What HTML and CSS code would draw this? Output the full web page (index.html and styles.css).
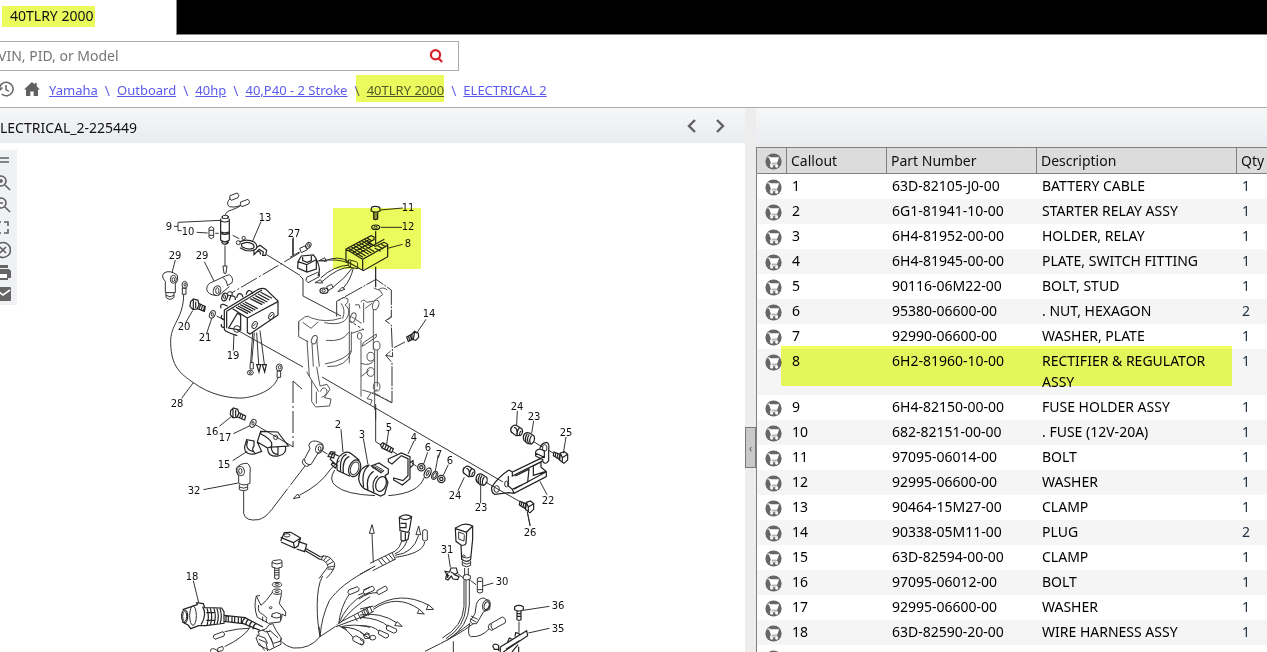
FILE: index.html
```html
<!DOCTYPE html>
<html lang="en">
<head>
<meta charset="utf-8">
<title>40TLRY 2000 - ELECTRICAL 2</title>
<link rel="stylesheet" href="styles.css">
</head>
<body>
<svg class="defs" aria-hidden="true">
  <symbol id="cart" viewBox="0 0 18 18">
    <circle cx="9" cy="9" r="8.600" fill="#666"/>
    <path d="M2.500 4.200h2.200l2.200 6.300h6" fill="none" stroke="#fff" stroke-width="1.200"/>
    <path d="M4.800 4.600h10.200l-1.900 5.200H6.700z" fill="#fff"/>
    <path d="M6.800 10.500l-1 1.900h7.700" fill="none" stroke="#fff" stroke-width="1.100"/>
    <circle cx="7" cy="14" r="1.500" fill="#fff"/><circle cx="12.300" cy="14" r="1.500" fill="#fff"/>
  </symbol>
</svg>
<div class="app">
  <header class="tabs"><button class="tab" type="button"><span class="mark tab-mark">40TLRY 2000</span></button></header>

  <form class="search">
    <input type="text" placeholder="VIN, PID, or Model" aria-label="VIN, PID, or Model">
    <button type="button" aria-label="Search"><svg width="14" height="14" viewBox="0 0 14 14" fill="none" stroke="#d8232a" stroke-width="2.200"><circle cx="6.500" cy="5.800" r="4.600"/><path d="M9.300 9l3.800 4"/></svg></button>
  </form>

  <nav class="crumbs" aria-label="Breadcrumb">
    <button type="button" aria-label="History"><svg width="20" height="16" viewBox="0 0 20 16" fill="none" stroke="#666" stroke-width="1.500"><path d="M5.500 8a6.800 6.800 0 1 1 2.200 5M2.500 6.500l3 3 3-3M12 4v4.500l3 2"/></svg></button>
    <a class="home" href="#" aria-label="Home"><svg width="16" height="16" viewBox="0 0 16 16" fill="#606060"><path d="M8 1l2.700 2.500V2h2v3.300L16 8.500h-2V15h-4.300v-4.500H6.300V15H2V8.500H0z"/></svg></a>
    <ol>
      <li><a href="#">Yamaha</a></li>
      <li><a href="#">Outboard</a></li>
      <li><a href="#">40hp</a></li>
      <li><a href="#">40,P40 - 2 Stroke</a></li>
      <li class="current"><a href="#">40TLRY 2000</a></li>
      <li><a href="#">ELECTRICAL 2</a></li>
    </ol>
  </nav>

  <main class="split">
    <section class="drawing">
      <div class="bar">
        <h1>LECTRICAL_2-225449</h1>
        <button type="button" aria-label="Previous"><svg width="12" height="14" viewBox="0 0 12 14"><path d="M9 1L3 7l6 6"/></svg></button>
        <button type="button" aria-label="Next"><svg width="12" height="14" viewBox="0 0 12 14"><path d="M3 1l6 6-6 6"/></svg></button>
      </div>
      <div class="stage">
        <svg class="diagram" viewBox="0 143 745 509" role="img" aria-label="Electrical parts diagram">
          <g class="ink">
            <g transform="translate(150 180) scale(.3333)">
              <path d="M72 139H84M212 121L84 127V152H95M140 157L173 159M196 160H206M177 144q7-8 14 0v28q-7 8-14 0zM177 151h14M177 166h14"/>
              <path class="bold" d="M212 116v64q13 12 26 0v-64M212 155q13 7 26 0M212 160q13 7 26 0M214 186q10 14 22 0M217 108v8M234 108v8M212 122q13 8 26 0"/><ellipse cx="226" cy="111" rx="10" ry="5"/>
              <path d="M226 106Q228 94 245 90Q262 84 273 76M241 55Q226 70 238 80Q250 84 272 77M272 66l22-8q8 6 2 14l-20 8q-8-6-4-14M240 47l22-8q8 6 2 14l-20 8q-8-6-4-14M225 197V258M219 258H231L228 280H222Z"/>
              <path d="M248 166L268 176M350 224L450 286M333 125L308 183M430 172V229"/>
              <path class="bold" d="M268 186Q290 174 314 187Q326 198 317 208Q296 220 270 203M274 192Q292 182 308 192Q316 199 309 205Q294 211 276 200ZM318 204L330 196L350 211L347 226L338 226L340 216L328 208L320 216L312 224V208M322 212l8 4 2 8"/><circle cx="265" cy="188" r="6"/><circle cx="281" cy="174" r="5"/>
              <path stroke-dasharray="55 7 6 7" d="M450 218L243 340"/>
              <path d="M76 240L66 278M42 279Q60 268 82 286Q87 302 76 312V338H46V304Q32 290 42 279M48 338v14q12 12 24 0v-14M48 346q12 9 24 0"/><ellipse cx="70" cy="298" rx="9" ry="12"/><ellipse cx="70" cy="299" rx="4" ry="6"/>
              <path d="M163 245L192 303M200 346Q174 346 170 328Q171 309 190 305L226 288M205 347L238 320M226 288l12-4q14 10 8 24l-12 8M219 292q12 9 14 26"/><ellipse cx="201" cy="332" rx="11" ry="15" transform="rotate(20 201 332)"/><ellipse cx="202" cy="332" rx="5" ry="9"/>
              <ellipse cx="104" cy="315" rx="8" ry="11"/><ellipse cx="105" cy="314" rx="3" ry="5"/><path d="M97 324h11v19H97zM101 343C100 420 60 430 62 490C64 560 90 580 130 608C180 645 240 656 280 654C330 648 375 625 384 592M382 572h10v20h-11z"/><ellipse cx="388" cy="563" rx="9" ry="11"/><ellipse cx="389" cy="562" rx="4" ry="5"/><path d="M130 608L95 655"/>
              <path class="bold" d="M122 365l8-8 14 4 3 14-6 12-12 2-9-10zM130 360v28M137 365v20M144 369l22 11-3 14-22-9M152 373l-4 12M158 376l-4 12M164 380l-4 12"/><path d="M128 392L107 428M185 416L170 460M200 408L222 420"/><ellipse cx="187" cy="403" rx="8" ry="12" transform="rotate(25 187 403)"/><ellipse cx="187" cy="403" rx="3" ry="6"/>
              <path class="bold" d="M223 390V448Q224 455 262 467M223 390L325 328Q343 321 352 332L384 363V405L300 462L292 457V414L384 365M292 414L248 386M230 394V445M230 394L336 330M236 444L262 400L272 406V450Z"/>
              <path class="bold" d="M258 382l36 19M264 378l38 20M271 374l38 20M278 370l38 20M285 366l38 20M301 356l36 18M308 352l36 18M316 347l36 19M324 342l34 18M332 337l34 18"/>
              <path class="bold" d="M213 385q-4-14 8-12l12 6M238 362l4-14q16-2 14 12M260 354q4-20 16-10l3 8M288 344q6-20 18-8l2 6M216 405q-7 10 6 14M214 432q-2 11 8 10"/><ellipse class="bold" cx="224" cy="351" rx="8" ry="12" transform="rotate(20 224 351)"/><ellipse cx="224" cy="351" rx="3" ry="6"/><ellipse cx="240" cy="341" rx="8" ry="6"/>
              <circle cx="261" cy="447" r="10"/><ellipse cx="314" cy="435" rx="7" ry="11" transform="rotate(25 314 435)"/><ellipse cx="364" cy="408" rx="7" ry="11" transform="rotate(25 364 408)"/><path d="M309 439l9-9M359 412l9-9M252 462L250 512"/>
              <path d="M308 458L302 548M313 458L305 548M320 458L326 552M330 452L343 552M301 548h9v19h-10z"/><path class="bold" d="M320 554h12l-5 22zM337 554h12l-5 22z"/><ellipse cx="301" cy="578" rx="9" ry="7"/><ellipse cx="301" cy="578" rx="3" ry="3"/>
            </g>
            <path d="M237 330L303 367M322 377L503 482M300 276L303 279V296L341 316M302 389L293 381"/>
            <path stroke-dasharray="22 3 2 3" d="M293 381V447"/>
            <g transform="translate(290 180) scale(.3333)">
              <path class="bold" d="M245 82q10-6 24 0l2 10q-13 9-28 0zM251 97v20q5 4 12 0V97M251 102h12M251 108h12M251 114h12"/><path d="M272 90L338 84M272 142H336M293 205L338 193"/><ellipse class="bold" cx="257" cy="142" rx="12" ry="7"/><ellipse cx="257" cy="142" rx="5" ry="3"/>
              <path class="bold" d="M257 154V192M257 260V322"/><path class="bold" d="M168 207L243 167L252 171V179L234 188L256 199L282 187L293 193V230L220 272L168 243ZM168 207L218 238L293 196M218 238V270"/>
              <path class="bold" d="M175 204l44 28M183 200l44 28M191 196l45 27M199 191l45 28M207 187l46 28M215 182l30 18M223 178l22 14M231 173l15 10M254 204l18 10M264 198l16 9M274 193l14 8M177 212l62-34M188 218l52-29M199 224l84-46"/>
              <path d="M176 239l22 6 5 4v17l-22-4-7-6zM182 242v20M175 244Q145 226 106 242M177 250Q145 234 84 243M178 255Q130 258 92 294M183 262Q145 260 95 306M187 264Q165 295 128 323M190 264Q182 300 160 324M88 242l16-9 5 11zM75 308l16-9 7 10zM144 335l12-13 9 6z"/>
              <path class="bold" d="M24 245l10-17 36-3 9 12v30l-28 9-28-12zM24 245l26 9 28-15M50 254v21M38 231v11l14 5 12-5v-14M80 240q14 28 4 48"/><path d="M50 292l33-15q9 4 5 13l-34 18q-10-6-4-16M29 205l18-8 5 12-18 9zM110 320l15-7 4 10-15 9z"/><ellipse cx="55" cy="196" rx="7" ry="10" transform="rotate(35 55 196)"/><ellipse cx="56" cy="196" rx="3" ry="5"/><ellipse class="bold" cx="102" cy="332" rx="12" ry="8"/><ellipse cx="101" cy="332" rx="5" ry="4"/>
              <path d="M0 232L28 216M8 175V226"/>
              <path stroke-dasharray="60 4 6 4" d="M140 410V364L258 298L304 330V412L286 422L304 435L308 530L287 526L306 548V668L254 640"/>
              <path class="thin" d="M146 363q12-16 28-6 3 12-9 18 12 7 11 24-6 42-73 29M153 370q15 18 5 46M26 425l18-14q12-6 20 3 46 16 90 0M26 425v45l29 16M38 427l25 18 21-19M51 481L58 590M66 490L70 560M80 478L88 560M26 452V425M178 370v180M184 455v60Q170 562 112 560M176 457q-18 30-68 24M184 512Q168 540 105 552"/>
              <g class="thin"><ellipse cx="73" cy="479" rx="8" ry="13" transform="rotate(20 73 479)"/><ellipse cx="189" cy="413" rx="8" ry="15" transform="rotate(20 189 413)"/><ellipse cx="257" cy="375" rx="9" ry="15" transform="rotate(20 257 375)"/><ellipse cx="209" cy="468" rx="7" ry="10"/><ellipse cx="260" cy="497" rx="10" ry="13"/><ellipse cx="242" cy="530" rx="11" ry="13"/><ellipse cx="242" cy="576" rx="11" ry="13"/><ellipse cx="260" cy="620" rx="10" ry="13"/></g>
              <path class="thin" d="M50 575L65 601V665L77 681L119 678L123 657L103 653 120 628 111 613 90 618 80 560M65 601L86 635M79 635V671M91 635q8-20 20-5 0 16-16 22M195 375l12-1 3 12M212 366q10-12 18 1l20-3 28-20-8-13-19-7M221 368v60M250 387V510M226 385l20-15M184 410L215 430M185 460L220 448M220 488l39-26v9l-42 28zM213 480V650M254 510V690M262 510V620M213 550q28 10 40-10M213 590l25-20M217 630l27 8-13 18 15 4-5 14M262 628l-16 12 20 8 38 20M264 330q14-12 28 0M293 420l11-12M288 525l14-12"/>
              <path d="M178 422L222 450" stroke-dasharray="9 6"/><path d="M408 418L380 460M345 486L312 503"/><path class="bold" d="M366 462l8-8 11 6 1 12-9 9-11-3zM374 455l-4 24M366 462l-16 9 5 13 15-7M360 466l5 13M355 469l5 12"/>
              <path d="M257 672V720"/>
            </g>
            <g transform="translate(150 390) scale(.3333)">
              <path class="bold" d="M242 62l8-8 13 4 4 12-7 12-12 1-7-9zM249 57v24M257 60v20M265 67l22 11-3 12-22-9M273 71l-4 12M279 74l-4 12"/><path d="M246 78L208 109M250 131L300 107M316 104L430 171M248 212L292 184"/><ellipse cx="309" cy="100" rx="8" ry="13" transform="rotate(25 309 100)"/><ellipse cx="309" cy="100" rx="3" ry="6"/>
              <path class="bold" d="M332 124L383 126L415 168L365 171V158Q360 146 332 131ZM332 124L322 156L353 174L364 170M322 157L335 184 314 192Q282 196 284 170L290 149 312 153V168Q302 180 317 191M293 153q-10 26 18 32M353 174q0 28 32 24 27-6 21-30M364 171q0 20 18 22M384 172v24"/><ellipse cx="377" cy="142" rx="6" ry="7"/>
              <path d="M160 299L265 279M259 234Q272 219 292 220Q304 228 300 249V280Q281 290 266 279V258Q256 248 259 234M268 283v16q13 7 25 0v-16M268 291q13 7 25 0M281 302V370Q286 395 325 389"/><ellipse cx="272" cy="243" rx="11" ry="14" transform="rotate(-15 272 243)"/><ellipse cx="271" cy="243" rx="5" ry="8"/>
              <path stroke-dasharray="130 5 4 5" d="M325 389Q345 385 365 359L465 228"/><path d="M480 158Q494 146 518 162Q524 179 505 188L483 224Q462 224 464 206L480 176Q473 165 480 158M461 206q-8 10-1 18 11 10 18 2"/><ellipse cx="508" cy="176" rx="11" ry="14" transform="rotate(20 508 176)"/><ellipse cx="509" cy="176" rx="4" ry="7"/>
              <path d="M519 184l13 8M430 326l13-14 7 10zM448 316Q510 285 540 240Q555 222 569 212"/>
            </g>
            <g transform="translate(310 390) scale(.3333)">
              <path d="M93 118L99 186M160 145L174 224M236 122L230 162M312 153L294 192M353 187L341 222M385 194L376 244M415 224L400 256M197 50V155L210 163M247 184L262 193M305 219L320 229"/>
              <path class="bold" d="M100 190q12-9 26 3l22 18M120 259L82 241q-8-36 18-51M110 193q-22 7-18 51M118 199q-22 8-18 50"/><ellipse class="bold" cx="134" cy="235" rx="17" ry="26" transform="rotate(20 134 235)"/><ellipse cx="134" cy="235" rx="12" ry="20" transform="rotate(20 134 235)"/><path class="bold" d="M86 198L68 190 61 208 79 225M62 185l13 2-4 17-17-5 8-14M57 190l12 4M70 214l-6 10 12 10 6-10M66 218l12 6"/>
              <path class="bold" d="M179 225q-31 5-33 41 3 21 17 30L212 318 224 312 234 278 225 257 235 250V237L207 219 184 228 213 248 222 241M176 228q-23 15-15 64M191 244q-25 16-17 58M204 257q-22 15-12 50"/><ellipse class="bold" cx="213" cy="282" rx="15" ry="23" transform="rotate(20 213 282)"/><path d="M186 232l28 15M190 229l26 14M194 226l24 13"/>
              <path d="M74 240Q54 270 78 288Q105 313 195 317M235 317Q327 310 342 263"/>
              <path class="bold" d="M211 164l8-6 31 18-5 12-29-14zM222 161l-5 12M229 165l-5 12M236 169l-5 12M243 173l-5 12"/><path class="bold" d="M235 207L274 189L300 200V266L277 285L251 270V264L279 272L294 257V206L274 197L246 222 235 215ZM300 218l9-6 1 12-9 9"/>
              <g class="bold"><circle cx="334" cy="232" r="11"/><circle cx="334" cy="232" r="5"/><circle cx="394" cy="267" r="11"/><circle cx="394" cy="267" r="5"/></g><ellipse class="bold" cx="353" cy="249" rx="9" ry="16" transform="rotate(25 353 249)"/><ellipse cx="353" cy="249" rx="3" ry="8" transform="rotate(25 353 249)"/><ellipse cx="374" cy="256" rx="8" ry="13" transform="rotate(25 374 256)"/><ellipse cx="374" cy="256" rx="4" ry="9" transform="rotate(25 374 256)"/>
            </g>
            <g transform="translate(440 390) scale(.3333)">
              <path d="M232 63L230 105M281 92L275 130M378 141L370 190M300 274L321 314M54 302L73 262M122 340V286M270 408L262 366M281 155L310 173M326 181L342 191M136 276L240 335"/>
              <g class="bold">
                <path d="M217 110q5-8 14-3l15 10q5 10-4 19l-14 1-13-10q-6-8 2-17M222 112q12 2 8 22M238 114q-8 8-6 22M215 128q-6-8 0-18M244 122q-6 4-6 14"/>
                <path transform="translate(-143 123)" d="M217 110q5-8 14-3l15 10q5 10-4 19l-14 1-13-10q-6-8 2-17M222 112q12 2 8 22M238 114q-8 8-6 22M215 128q-6-8 0-18M244 122q-6 4-6 14"/>
                <path d="M254 131q8-6 16-1l12 8q6 14-8 24l-12-2-10-9q-5-10 2-20M262 131q-10 14-2 28M268 133q-10 14-2 28M275 137q-10 12-3 25"/>
                <path transform="translate(-142 124)" d="M254 131q8-6 16-1l12 8q6 14-8 24l-12-2-10-9q-5-10 2-20M262 131q-10 14-2 28M268 133q-10 14-2 28M275 137q-10 12-3 25"/>
              </g>
              <path class="bold" d="M207 240L217 246L313 200M207 240Q175 260 155 292Q153 306 164 313L207 308L222 310L319 260V245L303 232V216L280 228V256L318 244M287 190Q285 180 299 177Q302 160 320 157Q329 160 326 180V212Q316 226 309 215M287 190L313 202V182L299 177M287 190V198L310 210M217 246V258L310 212M205 258V288L217 298L222 310M217 298L263 276L267 238L226 258M319 245L222 298"/><ellipse cx="170" cy="297" rx="8" ry="10"/><ellipse cx="199" cy="282" rx="5" ry="9"/><ellipse cx="314" cy="174" rx="7" ry="10"/>
              <g class="bold"><path d="M342 186l18 7-4 14-16-10zM348 188l-3 12M354 191l-3 12M361 189l12-4 10 8v17l-11 10-13-9zM361 189l6 14v16M367 203l16-10"/><path transform="translate(-102 148)" d="M342 186l18 7-4 14-16-10zM348 188l-3 12M354 191l-3 12M361 189l12-4 10 8v17l-11 10-13-9zM361 189l6 14v16M367 203l16-10"/></g>
            </g>
            <g transform="translate(170 510) scale(.3333)">
              <path d="M70 212L86 278M318 151q20-5 18 5v15q-15 9-30 0v-15q2-7 12-5M306 158q15 8 30 0M314 174v31q6 5 13 0v-31M314 181h13M314 188h13M314 195h13"/><ellipse cx="321" cy="224" rx="14" ry="7"/><ellipse cx="321" cy="223" rx="6" ry="3"/><ellipse cx="321" cy="245" rx="14" ry="8"/><ellipse cx="321" cy="245" rx="6" ry="3"/>
              <path d="M308 246L290 270 273 286 259 258Q250 290 262 322L296 340 330 336Q338 320 336 312L347 318V306L328 281 335 250M259 258l11-1M266 285q-5 22 12 28l14 12M306 322v-10q14-9 26 0v20M303 318q17 12 32 0M278 320v14M289 326v12"/><ellipse cx="302" cy="293" rx="4" ry="3"/>
              <path d="M298 344l10-3 9 18 16 24v20l-35 17-31-14-9-22 10-12-4-7 23-8zM260 375l25 9 8 17M290 362l19 38M266 388l22 9 5 26M298 360l27 24M310 400l24-7M268 400l16 22M312 412l-10-30M276 360q10 9 25 4"/>
              <path class="bold" d="M38 299L82 284 80 278 100 281 104 293 155 294 162 305V340L107 347 86 347 62 356 55 346 36 335M98 290q14 25-5 54M111 294q8 26 0 52M121 295q8 25 0 50M132 296q8 23 0 47M141 296q8 23 0 47M150 296q8 23 0 47M109 308h24M109 331h24"/><ellipse class="bold" cx="44" cy="319" rx="9" ry="19"/><ellipse cx="44" cy="319" rx="6" ry="15"/><ellipse cx="69" cy="317" rx="10" ry="29"/>
              <path class="bold" d="M162 316L225 323 279 351M162 334L220 341 270 361M168 316v18M175 317v19M186 318v18M194 319v18M205 320v19M214 321v20M226 323q-9 7-9 17M236 328q-9 7-9 18M247 334q-9 7-9 18M258 340q-9 7-9 18"/>
              <path d="M132 375l27-10q8 7 3 13l-27 10q-9-6-3-13M164 365Q205 355 237 355M164 410Q222 382 242 350M143 415l14-6q7 8 0 13l-14 3zM122 425q-2-12 12-8 13 5 10 10"/>
              <path class="bold" d="M332 93L343 68 362 67 392 84 384 108 374 114 333 96M332 82L370 98M370 98L374 114M370 98L392 84M384 94l26 9-6 22-24-8"/><ellipse cx="351" cy="76" rx="9" ry="5"/><path class="bold" d="M406 115L452 141M404 121L448 147"/><path d="M452 141Q475 130 493 158Q500 175 469 205M446 147Q470 150 474 170L447 206M460 135l-6 14M472 138l-11 13M482 145l-15 12M490 155l-18 10M494 168l-20 4M491 178l-19-1"/>
              <path d="M458 198C435 235 440 330 450 380M600 177C540 208 500 240 478 272Q455 320 450 380M335 384l-5 10M337 397Q350 410 370 414Q420 418 450 380L497 349M450 380Q450 360 447 350M498 350L600 312M512 336L600 290M500 344l30 15"/>
              <path d="M506 342Q512 290 538 252M506 342Q530 280 585 252M510 340Q550 290 600 260M515 350Q550 340 600 352M515 352Q555 350 585 375M515 352Q530 358 550 383M536 240l26-10q9 6 4 13l-27 11q-9-7-3-14M580 240l20-9M584 253l16-6M548 383l10-6 24 14q2 12-8 14l-25-13zM582 375l8-7 10 5M582 375l18 11"/>
              <path d="M552 316l10 18M563 309l10 19M575 303l10 20M587 297l9 20"/>
            </g>
            <g transform="translate(360 510) scale(.3333)">
              <path d="M36 72L40 158M28 70h15l-7-26zM168 74h14l-6-26zM0 193L46 168M30 160L102 125M38 182L107 147M64 144l15 17M76 138l15 18M86 133l15 18M96 128l10 20M55 149l14 18"/>
              <path class="bold" d="M118 22Q136 8 155 20L148 61 143 67 120 62ZM118 22q17 14 36 0M122 40h16v13h-17M123 66v24l7 4 6-4V68M136 92l8-4 4-22"/><path d="M126 92Q120 115 102 126M141 92Q132 120 104 132M176 76Q160 130 105 136M194 96Q190 130 106 142M188 62q7-7 14 0v28q-7 7-14 0z"/>
              <path d="M11 242l26-14q9 7 5 13L16 254q-9-5-5-12M51 242l25-14q9 7 5 13L56 254q-8-5-5-12M-3 267Q25 247 52 248M-5 255L12 248M0 297L40 288M0 326L42 303M10 296l8 22M20 292l8 22M30 290l7 17M40 292Q120 240 205 285M40 298Q110 250 178 298M205 284l16 14-22 1zM178 298l15 14-21-2zM0 315Q60 305 110 338M0 322Q60 325 85 350M0 347Q40 346 57 364M111 335l16 14-23-2zM82 345l28 13q1 12-10 11L80 359q-3-9 2-14M57 360l28 13q3 11-9 11L55 372zM10 374l15-2 6 12-16 2zM0 365l12 10M0 388l12 8-4 9-8-4"/><ellipse cx="38" cy="383" rx="9" ry="7"/>
              <path class="bold" d="M286 54L294 50Q315 36 338 48V87L332 148Q321 160 305 148L303 105 288 94ZM286 56l26 8q8 0 8 8l-2 28q-2 8-15 5M320 66l18-18"/><path d="M296 66l14 5q4 2 3 6l-1 16-16-6zM305 138q17 12 28 0M307 152v14q14 9 25 0v-14M308 158q12 9 24 0"/><circle cx="311" cy="139" r="4"/>
              <path d="M314 174V196M325 174V196M310 197q10-8 21 0v10q-12 7-21 0zM312 209V290Q308 350 247 384M318 209V290Q315 350 258 386M328 207V285Q326 350 263 390"/>
              <path d="M265 132L271 172M293 191L309 203M331 211L348 224M352 205q8-5 16 0v41q-8 7-16 0zM352 214h16M352 239h16M369 228L400 219"/><path class="bold" d="M255 184l14 2 4-12 16 0 4 14-10 6 14 6-4 9-14-2-5-9-10 12-7-3 3-14zM273 186l10 6M263 190v14M258 194l10 4"/>
              <path d="M349 284Q354 264 372 264Q394 276 389 298L371 305 350 341Q337 345 330 334L345 311ZM333 318l20 10M330 326l20 11"/><ellipse cx="379" cy="286" rx="11" ry="17" transform="rotate(20 379 286)"/><ellipse cx="380" cy="287" rx="7" ry="12" transform="rotate(20 380 287)"/>
              <path d="M340 341Q295 376 195 424M331 340Q290 370 262 390M280 394V426M329 340Q320 380 335 380Q365 382 388 356M387 344l40-23q14 6 8 18l-40 22q-14-4-8-17M394 341q-4 10 5 18M490 301L568 289M505 369L568 355"/>
              <path class="bold" d="M464 290q12-8 26 0v9q-12 8-26 0zM471 303v26q5 4 12 0v-26M471 311h12M471 319h12"/><path d="M477 335V367"/><path class="bold" d="M421 411L500 362 503 377 430 426M421 411v15M442 398l6-14 10 5M465 380l2-12 10 2 2 7M438 418l40-26M456 426l18-22M476 410v16M398 407q8-9 18 0v16M398 407l5 11h15"/>
              <path d="M502 6L511 47"/>
            </g>
          </g>
          <g class="numbers">
            <text x="169" y="230">9</text><text x="188" y="235">10</text><text x="265" y="221">13</text><text x="294" y="237">27</text><text x="408" y="211">11</text><text x="408" y="230">12</text><text x="408" y="247">8</text><text x="175" y="259">29</text><text x="202" y="259">29</text><text x="184" y="330">20</text><text x="205" y="341">21</text><text x="233" y="359">19</text><text x="429" y="317">14</text><text x="177" y="407">28</text><text x="212" y="435">16</text><text x="225" y="441">17</text><text x="224" y="468">15</text><text x="194" y="494">32</text><text x="338" y="428">2</text><text x="362" y="438">3</text><text x="389" y="431">5</text><text x="414" y="441">4</text><text x="428" y="451">6</text><text x="439" y="458">7</text><text x="450" y="464">6</text><text x="517" y="410">24</text><text x="534" y="420">23</text><text x="566" y="436">25</text><text x="455" y="499">24</text><text x="481" y="511">23</text><text x="548" y="504">22</text><text x="530" y="536">26</text><text x="447" y="553">31</text><text x="502" y="585">30</text><text x="558" y="609">36</text><text x="558" y="632">35</text><text x="192" y="580">18</text>
          </g>
          <rect class="spot" x="333" y="208" width="88" height="61"/>
        </svg>
        <div class="tools">
          <button type="button" aria-label="Menu"><svg viewBox="0 0 20 20"><path d="M1 7h17M1 11h17"/></svg></button>
          <button type="button" aria-label="Zoom in"><svg viewBox="0 0 20 20"><circle cx="10" cy="8" r="5"/><path d="M14 12l5 5M10 6v4M8 8h4"/></svg></button>
          <button type="button" aria-label="Zoom out"><svg viewBox="0 0 20 20"><circle cx="10" cy="8" r="5"/><path d="M14 12l5 5M8 8h4"/></svg></button>
          <button type="button" aria-label="Full screen"><svg viewBox="0 0 20 20"><path d="M6 9V5h4M13 5h4v4M17 12v4h-4M10 16H6v-4"/></svg></button>
          <button type="button" aria-label="Close"><svg viewBox="0 0 20 20"><circle cx="12" cy="11" r="7.500"/><path d="M9 8l6 6M15 8l-6 6"/></svg></button>
          <button type="button" aria-label="Print"><svg viewBox="0 0 20 20"><path fill="#666" stroke="none" d="M6 4h11v3H6zM4 8h14l2 2v7h-3v2H5z"/><path fill="#fff" stroke="none" d="M7 13h9v4H7z"/></svg></button>
          <button type="button" aria-label="Email"><svg viewBox="0 0 20 20"><rect x="3" y="4" width="17" height="14" rx="1" fill="#666" stroke="none"/><path stroke="#fff" d="M5 7l7 5 7-5"/></svg></button>
        </div>
      </div>
    </section>

    <div class="splitter"><button type="button" aria-label="Collapse">‹</button></div>

    <section class="parts">
      <div class="parts-bar"></div>
      <table>
        <colgroup><col class="c-cart"><col class="c-call"><col class="c-part"><col class="c-desc"><col></colgroup>
        <thead><tr><th><svg class="cart"><use href="#cart"/></svg></th><th>Callout</th><th>Part Number</th><th>Description</th><th>Qty</th></tr></thead>
        <tbody>
          <tr><td><svg class="cart"><use href="#cart"/></svg></td><td>1</td><td>63D-82105-J0-00</td><td>BATTERY CABLE</td><td>1</td></tr>
          <tr><td><svg class="cart"><use href="#cart"/></svg></td><td>2</td><td>6G1-81941-10-00</td><td>STARTER RELAY ASSY</td><td>1</td></tr>
          <tr><td><svg class="cart"><use href="#cart"/></svg></td><td>3</td><td>6H4-81952-00-00</td><td>HOLDER, RELAY</td><td>1</td></tr>
          <tr><td><svg class="cart"><use href="#cart"/></svg></td><td>4</td><td>6H4-81945-00-00</td><td>PLATE, SWITCH FITTING</td><td>1</td></tr>
          <tr><td><svg class="cart"><use href="#cart"/></svg></td><td>5</td><td>90116-06M22-00</td><td>BOLT, STUD</td><td>1</td></tr>
          <tr><td><svg class="cart"><use href="#cart"/></svg></td><td>6</td><td>95380-06600-00</td><td>. NUT, HEXAGON</td><td>2</td></tr>
          <tr><td><svg class="cart"><use href="#cart"/></svg></td><td>7</td><td>92990-06600-00</td><td>WASHER, PLATE</td><td>1</td></tr>
          <tr class="picked"><td><svg class="cart"><use href="#cart"/></svg></td><td>8</td><td>6H2-81960-10-00</td><td>RECTIFIER &amp; REGULATOR ASSY</td><td>1</td></tr>
          <tr><td><svg class="cart"><use href="#cart"/></svg></td><td>9</td><td>6H4-82150-00-00</td><td>FUSE HOLDER ASSY</td><td>1</td></tr>
          <tr><td><svg class="cart"><use href="#cart"/></svg></td><td>10</td><td>682-82151-00-00</td><td>. FUSE (12V-20A)</td><td>1</td></tr>
          <tr><td><svg class="cart"><use href="#cart"/></svg></td><td>11</td><td>97095-06014-00</td><td>BOLT</td><td>1</td></tr>
          <tr><td><svg class="cart"><use href="#cart"/></svg></td><td>12</td><td>92995-06600-00</td><td>WASHER</td><td>1</td></tr>
          <tr><td><svg class="cart"><use href="#cart"/></svg></td><td>13</td><td>90464-15M27-00</td><td>CLAMP</td><td>1</td></tr>
          <tr><td><svg class="cart"><use href="#cart"/></svg></td><td>14</td><td>90338-05M11-00</td><td>PLUG</td><td>2</td></tr>
          <tr><td><svg class="cart"><use href="#cart"/></svg></td><td>15</td><td>63D-82594-00-00</td><td>CLAMP</td><td>1</td></tr>
          <tr><td><svg class="cart"><use href="#cart"/></svg></td><td>16</td><td>97095-06012-00</td><td>BOLT</td><td>1</td></tr>
          <tr><td><svg class="cart"><use href="#cart"/></svg></td><td>17</td><td>92995-06600-00</td><td>WASHER</td><td>1</td></tr>
          <tr><td><svg class="cart"><use href="#cart"/></svg></td><td>18</td><td>63D-82590-20-00</td><td>WIRE HARNESS ASSY</td><td>1</td></tr>
          <tr><td><svg class="cart"><use href="#cart"/></svg></td><td></td><td></td><td></td><td></td></tr>
        </tbody>
      </table>
    </section>
  </main>
</div>
</body>
</html>
```
FILE: styles.css
```css
* { box-sizing: border-box; }
body { margin: 0; background: #fff; color: #111; font: 14px/21px "Noto Sans", "Open Sans", sans-serif; }
button { margin: 0; padding: 0; border: 0; background: none; font: inherit; color: inherit; }
button svg, a svg { display: block; }
.defs { position: absolute; width: 0; height: 0; }
.app { display: flex; flex-direction: column; height: 100vh; overflow: hidden; }

.tabs { display: flex; flex: none; height: 35px; background: #000; border-bottom: 1px solid #888; }
.tab { display: flex; align-items: flex-start; width: 177px; height: 35px; padding: 6px 2px; background: #fff; border-right: 1px solid #888; }
.mark { background: #ebfb5d; }
.tab-mark { padding: 0 2px 1px 8px; line-height: 20px; }

.search { display: flex; flex: none; align-items: center; width: 459px; height: 30px; margin-top: 6px; padding-right: 15px; border: 1px solid #aaa; border-left: 0; }
.search input { flex: 1; min-width: 0; height: 28px; margin-left: -2px; padding: 0 0 2px; border: 0; outline: 0; background: none; font: inherit; color: #222; }
.search input::placeholder { color: #757575; opacity: 1; }

.crumbs { display: flex; flex: none; align-items: center; height: 37px; padding-bottom: 1px; border-bottom: 1px solid #aaa; font-size: 13px; }
.crumbs button { margin-left: -6px; }
.home { margin: 0 9px 0 10px; }
.crumbs ol { display: flex; margin: 0; padding: 0; list-style: none; }
.crumbs li { display: flex; align-items: center; height: 27px; padding-top: 3px; white-space: nowrap; }
.crumbs li + li::before { content: "\\"; padding: 0 7px; font-size: 14px; color: #6b62e8; }
.crumbs a { color: #5a5af0; text-underline-offset: 1px; }
.crumbs .current { position: relative; }
.crumbs .current::after { content: ""; position: absolute; inset: 0 0 0 9px; background: #ebfb5d; mix-blend-mode: multiply; }
.crumbs .current a { color: #5a5a66; }

.split { display: grid; flex: 1; min-height: 0; grid-template-columns: minmax(0, 745fr) 11px minmax(0, 511fr); }
.drawing { display: flex; flex-direction: column; min-height: 0; overflow: hidden; }
.bar { display: flex; flex: none; align-items: center; gap: 16px; height: 35px; padding-right: 19px; background: linear-gradient(#f6f7f8, #e9ebef); }
.bar h1 { flex: 1; margin: 4px 0 0; font-size: 14px; font-weight: 400; }
.bar svg { fill: none; stroke: #606060; stroke-width: 2.4; }
.stage { position: relative; }
.diagram { display: block; width: 100%; height: auto; }
.ink { fill: none; stroke: #333; stroke-width: 3; }
.ink > path { stroke-width: 1; }
.ink .bold { stroke: #222; stroke-width: 3.6; }
.ink .thin { stroke: #555; }
.numbers { font: 10px "DejaVu Sans", sans-serif; fill: #111; text-anchor: middle; }
.spot { fill: #ebfb5d; mix-blend-mode: multiply; }
.tools { position: absolute; top: 7px; left: 0; display: flex; flex-direction: column; gap: 2px; width: 17px; height: 155px; padding-top: 1px; overflow: hidden; background: #eff1f5; }
.tools button { width: 20px; height: 20px; margin-left: -9px; }
.tools svg { width: 20px; height: 20px; fill: none; stroke: #606060; stroke-width: 1.6; }

.splitter { display: flex; justify-content: center; align-items: flex-start; padding-top: 319px; background: #ededed; }
.splitter button { width: 11px; height: 41px; background: #c9c9c9; border: 1px solid #777; font-size: 10px; line-height: 38px; color: #555; }

.parts { min-height: 0; overflow: hidden; }
.parts-bar { height: 39px; background: linear-gradient(#f6f7f8, #e9ebef); }
table { width: 100%; table-layout: fixed; border-collapse: separate; border-spacing: 0; border-left: 1px solid #808080; }
.c-cart { width: 30px; }
.c-call { width: 100px; }
.c-part { width: 150px; }
.c-desc { width: 200px; }
th { height: 27px; padding: 2px 4px; background: #dcdcdc; border: 1px solid #808080; border-width: 1px 1px 1px 0; font-weight: 400; text-align: left; vertical-align: top; color: #111; }
th:last-child { border-right: 0; }
td { height: 25px; padding: 1px 5px 3px; vertical-align: top; color: #000; }
td:last-child { color: #234; }
th:first-child, td:first-child { padding: 5px 0 0 8px; }
tbody tr:nth-child(even) { background: #f5f5f5; }
.cart { display: block; width: 17px; height: 17px; }
.picked { position: relative; }
.picked td:last-child::after { content: ""; position: absolute; top: -3px; left: 24px; right: 35px; height: 40px; background: #efff60; mix-blend-mode: multiply; }
```
